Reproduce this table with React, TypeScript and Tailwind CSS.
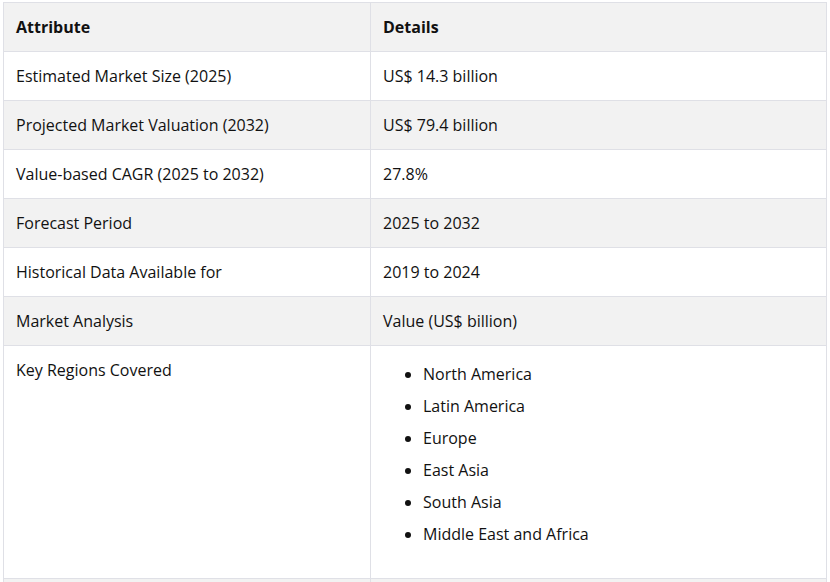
import React from "react";

const rows: { attr: string; details: string }[] = [
  { attr: "Estimated Market Size (2025)", details: "US$ 14.3 billion" },
  { attr: "Projected Market Valuation (2032)", details: "US$ 79.4 billion" },
  { attr: "Value-based CAGR (2025 to 2032)", details: "27.8%" },
  { attr: "Forecast Period", details: "2025 to 2032" },
  { attr: "Historical Data Available for", details: "2019 to 2024" },
  { attr: "Market Analysis", details: "Value (US$ billion)" },
];

const regions = [
  "North America",
  "Latin America",
  "Europe",
  "East Asia",
  "South Asia",
  "Middle East and Africa",
];

const cell = "border border-[#dfe0e6] px-3 py-3 align-top leading-6";

const App: React.FC = () => {
  return (
    <div
      className="bg-white pl-[3px] pt-[2px] w-[830px] h-[582px] overflow-hidden text-[#111] text-base"
      style={{ fontFamily: '"Open Sans", "Liberation Sans", sans-serif' }}
    >
      <table className="w-[824px] border-collapse">
        <colgroup>
          <col className="w-[367px]" />
          <col />
        </colgroup>
        <thead>
          <tr className="bg-[#f2f2f2]">
            <th className={`${cell} text-left font-bold`}>Attribute</th>
            <th className={`${cell} text-left font-bold`}>Details</th>
          </tr>
        </thead>
        <tbody>
          {rows.map((r, i) => (
            <tr key={r.attr} className={i % 2 === 1 ? "bg-[#f2f2f2]" : "bg-white"}>
              <td className={cell}>{r.attr}</td>
              <td className={cell}>{r.details}</td>
            </tr>
          ))}
          <tr className="bg-white">
            <td className={cell}>Key Regions Covered</td>
            <td className={cell}>
              <ul className="list-disc pl-10 mb-4">
                {regions.map((r) => (
                  <li key={r} className="py-1">
                    {r}
                  </li>
                ))}
              </ul>
            </td>
          </tr>
          {/* next row, only its top edge is in view */}
          <tr className="bg-[#f2f2f2]">
            <td className={cell}>&nbsp;</td>
            <td className={cell}>&nbsp;</td>
          </tr>
        </tbody>
      </table>
    </div>
  );
};

export default App;
